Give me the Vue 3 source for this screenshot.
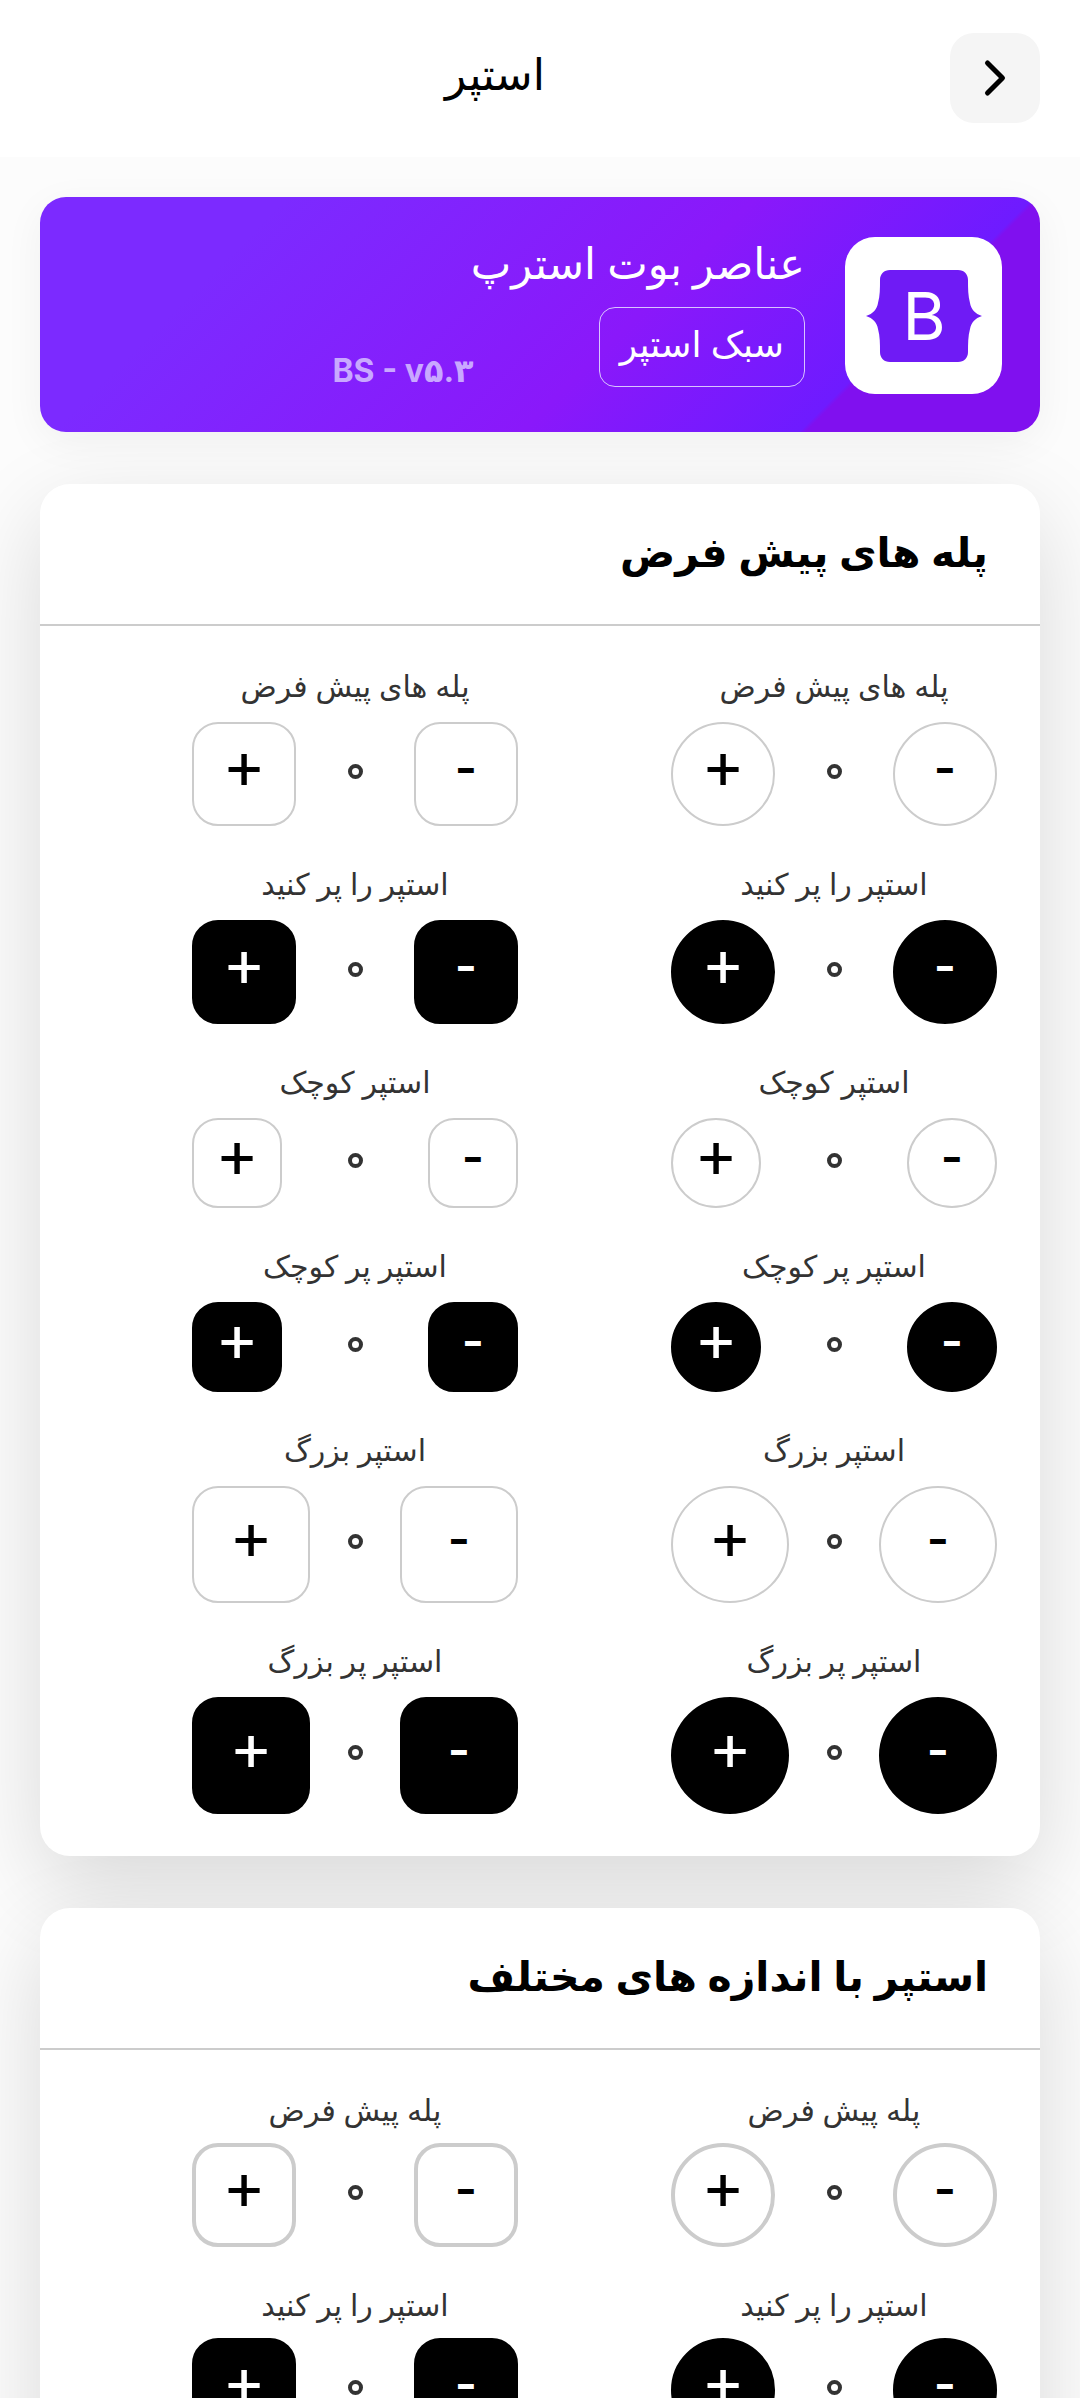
<template>
  <div class="page" dir="rtl">
    <header class="top-bar">
      <button class="back-btn" aria-label="back">
        <svg width="30" height="40" viewBox="0 0 30 40" fill="none">
          <path d="M7.5 5L22.5 20L7.5 35" stroke="#000" stroke-width="5" stroke-linecap="round" stroke-linejoin="round" />
        </svg>
      </button>
      <h1 class="page-title">استپر</h1>
    </header>

    <main class="content">
      <section class="banner">
        <div class="logo-box">
          <svg width="118" height="94" viewBox="0 0 118 94">
            <path class="logo-shape" d="M15 11c0-6 4-10 10-10h68c6 0 10 4 10 10 0 8 0 16 2 23 1 6 5 11 12 13-7 2-11 7-12 13-2 7-2 15-2 23 0 6-4 10-10 10H25c-6 0-10-4-10-10 0-8 0-16-2-23-1-6-5-11-12-13 7-2 11-7 12-13 2-7 2-15 2-23z" />
            <text x="59" y="71" class="logo-letter" text-anchor="middle">B</text>
          </svg>
        </div>
        <div class="banner-text">
          <h2 class="banner-title">عناصر بوت استرپ</h2>
          <div class="banner-row">
            <span class="banner-tag">سبک استپر</span>
            <span class="banner-version">BS - v۵.۳</span>
          </div>
        </div>
      </section>

      <section v-for="card in cards" :key="card.title" class="card">
        <h3 class="card-title">{{ card.title }}</h3>
        <div class="card-body" :class="{ thick: card.thick }">
          <div v-for="item in card.items" :key="item.id" class="stepper-col">
            <div class="stepper-label">{{ item.label }}</div>
            <div class="stepper">
              <button class="step-btn minus" :class="[item.size, item.shape, { filled: item.filled }]">-</button>
              <!-- the zero is a ring in the original font, drawn here with a border -->
              <span class="step-value">۰</span>
              <button class="step-btn plus" :class="[item.size, item.shape, { filled: item.filled }]">+</button>
            </div>
          </div>
        </div>
      </section>
    </main>
  </div>
</template>

<script setup>
const buildItems = (rows) => {
  const items = []
  rows.forEach((row, i) => {
    items.push({ ...row, id: i + '-c', shape: 'round' })
    items.push({ ...row, id: i + '-s', shape: 'square' })
  })
  return items
}

const cards = [
  {
    title: 'پله های پیش فرض',
    thick: false,
    items: buildItems([
      { label: 'پله های پیش فرض', size: 'md', filled: false },
      { label: 'استپر را پر کنید', size: 'md', filled: true },
      { label: 'استپر کوچک', size: 'sm', filled: false },
      { label: 'استپر پر کوچک', size: 'sm', filled: true },
      { label: 'استپر بزرگ', size: 'lg', filled: false },
      { label: 'استپر پر بزرگ', size: 'lg', filled: true }
    ])
  },
  {
    title: 'استپر با اندازه های مختلف',
    thick: true,
    items: buildItems([
      { label: 'پله پیش فرض', size: 'md', filled: false },
      { label: 'استپر را پر کنید', size: 'md', filled: true }
    ])
  }
]
</script>

<style>
html,
body {
  margin: 0;
  background: #fcfcfc;
}
</style>

<style scoped>
.page {
  height: 2398px;
  overflow: hidden;
  font-family: "Noto Sans", "DejaVu Sans", sans-serif;
  color: #000;
}

.top-bar {
  position: relative;
  z-index: 1;
  height: 157px;
  background: #fff;
  display: flex;
  align-items: flex-start;
  padding: 33px 40px 0;
  box-sizing: border-box;
}

.back-btn {
  width: 90px;
  height: 90px;
  border: none;
  border-radius: 24px;
  background: #f5f5f5;
  display: flex;
  align-items: center;
  justify-content: center;
  padding: 0;
}

.page-title {
  flex: 1;
  margin: 0;
  text-align: center;
  font-size: 44px;
  font-weight: 400;
  line-height: 80px;
}

.content {
  padding: 40px;
  display: flex;
  flex-direction: column;
  gap: 52px;
}

.banner {
  height: 235px;
  border-radius: 26px;
  box-sizing: border-box;
  padding: 40px 38px;
  display: flex;
  gap: 40px;
  color: #fff;
  background: linear-gradient(135deg, #7c2aff 20%, #8a18fa 58%, #6e1bff 80.5%, #8010ef 81%);
  box-shadow: 0 10px 40px rgba(0, 0, 0, 0.05);
}

.logo-box {
  width: 157px;
  height: 157px;
  border-radius: 30px;
  background: #fff;
  display: flex;
  align-items: center;
  justify-content: center;
  flex-shrink: 0;
}

.logo-shape {
  fill: #6f1bf5;
}

.logo-letter {
  fill: #fff;
  font-family: "Inter", sans-serif;
  font-size: 66px;
  font-weight: 400;
}

.banner-title {
  margin: 0;
  font-size: 43px;
  font-weight: 400;
  line-height: 52px;
}

.banner-row {
  display: flex;
  align-items: flex-end;
  margin-top: 18px;
}

.banner-tag {
  height: 80px;
  padding: 0 20px 8px;
  border: 1.5px solid #d9c4ff;
  border-radius: 16px;
  box-sizing: border-box;
  display: flex;
  align-items: center;
  font-size: 36px;
}

.banner-version {
  margin-right: 125px;
  margin-bottom: -3px;
  font-family: "Inter", "DejaVu Sans", sans-serif;
  font-size: 32px;
  font-weight: 700;
  color: #c9a8ff;
}

.card {
  background: #fff;
  border-radius: 30px;
  box-shadow: 0 30px 90px rgba(0, 0, 0, 0.14);
}

.card-title {
  margin: 0;
  height: 142px;
  box-sizing: border-box;
  padding: 0 52px 6px;
  display: flex;
  align-items: center;
  font-size: 41px;
  font-weight: 700;
  border-bottom: 2px solid #ccc;
}

.card-body {
  display: grid;
  grid-template-columns: 479px 479px;
  padding: 42px 43px 42px 0;
  row-gap: 40px;
}

.stepper-col {
  width: 326px;
}

.stepper-label {
  height: 36px;
  margin-bottom: 18px;
  text-align: center;
  font-size: 30px;
  line-height: 36px;
  color: #333;
}

.thick .stepper-label {
  margin-bottom: 15px;
}

.stepper {
  display: flex;
  align-items: center;
  justify-content: space-between;
}

.step-value {
  width: 15px;
  height: 15px;
  box-sizing: border-box;
  margin-bottom: 6px;
  border: 4px solid #333;
  border-radius: 50%;
  overflow: hidden;
  font-size: 7px;
  line-height: 7px;
  color: transparent;
}

.step-btn {
  box-sizing: border-box;
  border: 2px solid #ccc;
  background: #fff;
  color: #000;
  font-family: "Inter", sans-serif;
  line-height: 1;
  display: flex;
  align-items: center;
  justify-content: center;
}

.step-btn.plus {
  padding: 0 0 20px;
  font-size: 66px;
  font-weight: 400;
}

.step-btn.minus {
  padding: 0 0 12px;
  font-size: 48px;
  font-weight: 600;
}

.thick .step-btn {
  border-width: 4px;
}

.step-btn.filled {
  background: #000;
  border-color: #000;
  color: #fff;
}

.step-btn.md {
  width: 104px;
  height: 104px;
}

.step-btn.sm {
  width: 90px;
  height: 90px;
}

.step-btn.lg {
  width: 118px;
  height: 117px;
}

.step-btn.round {
  border-radius: 50%;
}

.step-btn.square {
  border-radius: 26px;
}
</style>
